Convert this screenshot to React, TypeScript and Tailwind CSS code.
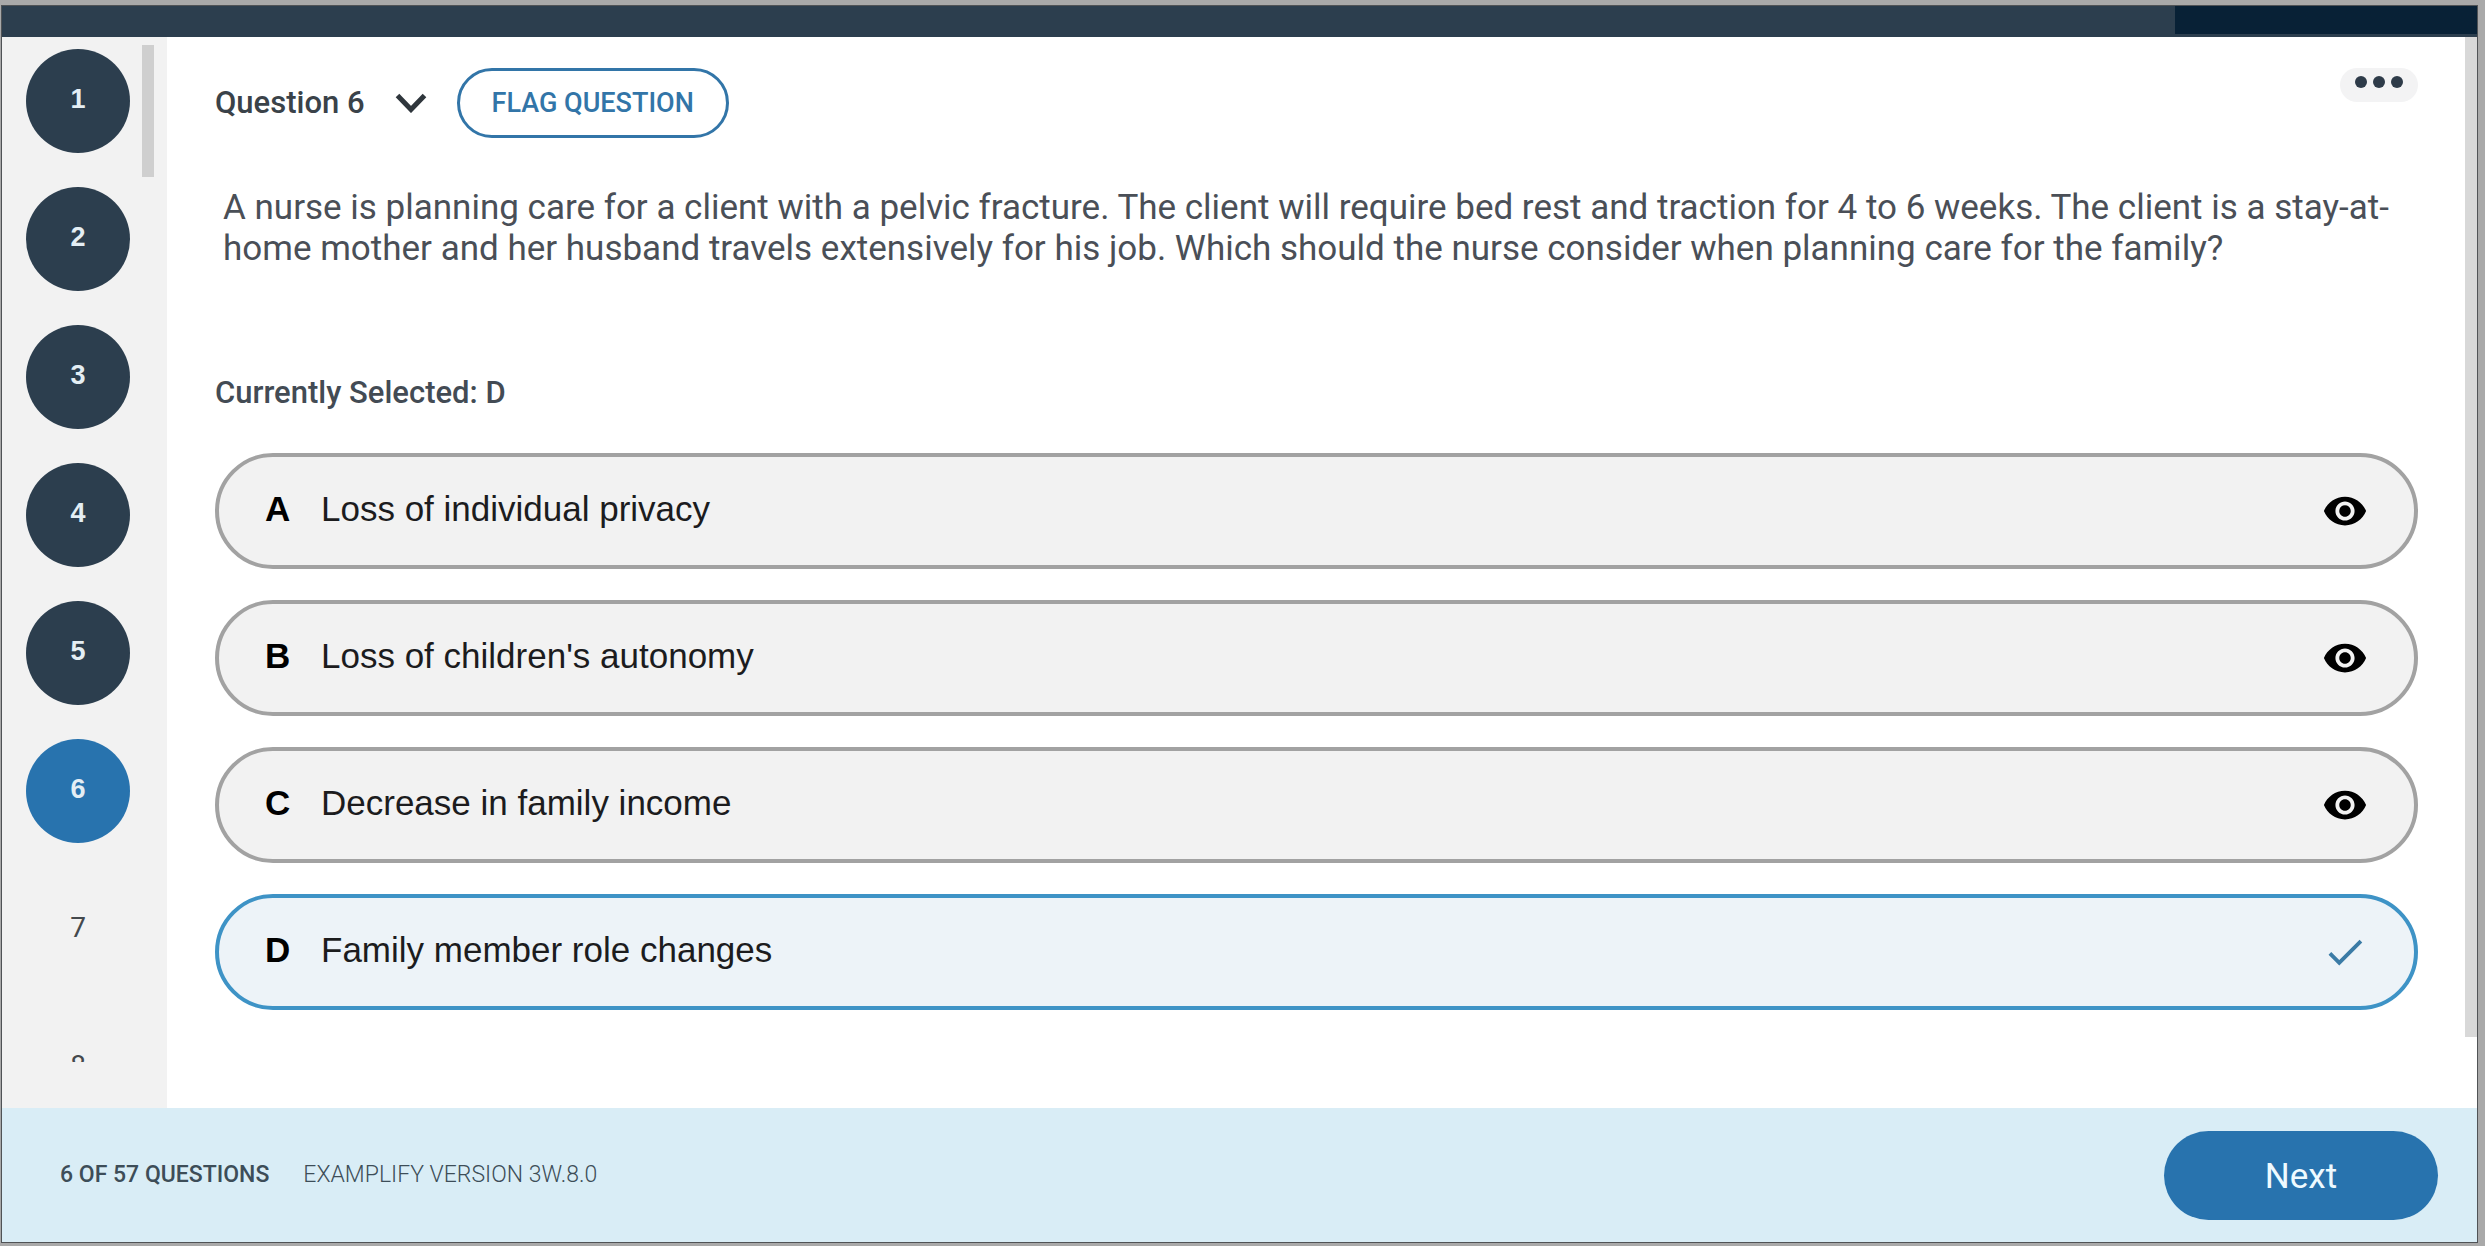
import { useState } from "react";
import { MdCheck, MdVisibility } from "react-icons/md";
import clsx from "clsx";

interface Answer {
    letter: string;
    text: string;
}

const answers: Answer[] = [
    { letter: "A", text: "Loss of individual privacy" },
    { letter: "B", text: "Loss of children's autonomy" },
    { letter: "C", text: "Decrease in family income" },
    { letter: "D", text: "Family member role changes" },
];

const questionNumbers = [1, 2, 3, 4, 5, 6, 7, 8];

interface QuestionNavProps {
    current: number;
    onSelect: (value: number) => void;
}

const QuestionNav: React.FC<QuestionNavProps> = ({ current, onSelect }) => {
    return (
        <nav aria-label="Questions" className="flex w-[165px] shrink-0 bg-[#f2f2f2] pb-[46px]">
            <div className="flex flex-1 flex-col items-center gap-[34px] overflow-hidden pt-3 pl-3">
                {questionNumbers.map((number) => (
                    <button
                        key={number}
                        onClick={() => onSelect(number)}
                        className={clsx(
                            "h-26 w-26 shrink-0 rounded-full leading-none",
                            number <= current
                                ? "pb-1 font-['Liberation_Sans',sans-serif] text-[27px] font-bold text-[#e4eef4]"
                                : "pb-[2px] text-[28px] text-[#44494d]",
                            number < current && "bg-[#2c3e4e]",
                            number === current && "bg-[#2873ae]"
                        )}
                    >
                        {number}
                    </button>
                ))}
            </div>
            {/* Scroll thumb */}
            <div className="mt-2 mr-[13px] h-[132px] w-3 bg-[#cfcfcf]" />
        </nav>
    );
};

interface AnswerOptionProps {
    answer: Answer;
    selected: boolean;
    onSelect: () => void;
}

const AnswerOption: React.FC<AnswerOptionProps> = ({ answer, selected, onSelect }) => {
    const id = `answer-${answer.letter}`;

    return (
        <div
            className={clsx(
                "flex h-29 items-center rounded-full border-4 pr-[46px] pl-11",
                selected ? "border-[#3e93c6] bg-[#edf3f8]" : "border-[#a2a2a2] bg-[#f2f2f2]"
            )}
        >
            <input
                type="radio"
                name="answer"
                id={id}
                checked={selected}
                onChange={onSelect}
                className="sr-only"
            />
            <label
                htmlFor={id}
                className="flex flex-1 cursor-pointer items-center pb-1 font-['Liberation_Sans',sans-serif] text-[35px] leading-10 text-[#1c1c1e]"
            >
                <span className="w-[58px] pl-[2px] font-bold text-black">{answer.letter}</span>
                <span>{answer.text}</span>
            </label>
            {selected ? (
                <MdCheck size={46} className="text-[#3b7ba6]" />
            ) : (
                <button aria-label={`Hide answer ${answer.letter}`} className="text-black">
                    <MdVisibility size={46} />
                </button>
            )}
        </div>
    );
};

const App = () => {
    const [question, setQuestion] = useState(6);
    const [selected, setSelected] = useState("D");

    return (
        <div className="h-screen bg-[#a9a9a9] pt-[5px] pr-[7px] pb-[3px] pl-px font-[Roboto,sans-serif]">
            <div className="flex h-full flex-col border border-[#505356] bg-white">
                {/* Top bar */}
                <header className="flex h-[31px] shrink-0 justify-end bg-[#2c3e4e]">
                    <div className="h-7 w-[302px] bg-[#082136]" />
                </header>

                <div className="flex min-h-0 flex-1">
                    <QuestionNav current={question} onSelect={setQuestion} />

                    <main className="flex-1 overflow-hidden pt-[31px] pr-[47px] pl-12">
                        <div className="flex items-start justify-between">
                            <div className="flex items-center gap-[30px]">
                                <button className="flex items-center gap-[30px] text-[31px] leading-10 font-medium text-[#3a4249]">
                                    Question {question}
                                    <svg width="32" height="20" viewBox="0 0 32 20" fill="none" aria-hidden="true">
                                        <path d="M2.5 2.5 16 16.5 29.5 2.5" stroke="#2f363c" strokeWidth="5" />
                                    </svg>
                                </button>
                                <button className="h-[70px] rounded-full border-3 border-[#3275a8] px-8 text-[27px] leading-10 font-medium text-[#3275a8]">
                                    FLAG QUESTION
                                </button>
                            </div>
                            <button aria-label="More options" className="flex h-[34px] w-[78px] justify-center rounded-full bg-[#f3f3f4] pt-2">
                                <svg width="48" height="12" viewBox="0 0 48 12" fill="#2e3b49" aria-hidden="true">
                                    <circle cx="6" cy="6" r="6" />
                                    <circle cx="24" cy="6" r="6" />
                                    <circle cx="42" cy="6" r="6" />
                                </svg>
                            </button>
                        </div>

                        <p className="mt-[49px] pl-2 text-[35px] leading-[41px] text-[#4a4f57]">
                            A nurse is planning care for a client with a pelvic fracture. The client will require bed
                            rest and traction for 4 to 6 weeks. The client is a stay-at-home mother and her husband
                            travels extensively for his job. Which should the nurse consider when planning care for the
                            family?
                        </p>

                        <h2 className="mt-[104px] text-[31px] leading-10 font-medium text-[#434b54]">
                            Currently Selected: {selected}
                        </h2>

                        <div className="mt-10 flex flex-col gap-[31px]">
                            {answers.map((answer) => (
                                <AnswerOption
                                    key={answer.letter}
                                    answer={answer}
                                    selected={answer.letter === selected}
                                    onSelect={() => setSelected(answer.letter)}
                                />
                            ))}
                        </div>
                    </main>

                    {/* Page scroll thumb */}
                    <div className="mb-[71px] w-3 shrink-0 bg-[#d8d8d8]" />
                </div>

                <footer className="flex h-[134px] shrink-0 items-center bg-[#d9edf6] pr-[39px] pl-[58px] text-[23px] text-[#3d4d58]">
                    <span className="font-medium">{question} OF 57 QUESTIONS</span>
                    <span className="ml-[34px] font-light">EXAMPLIFY VERSION 3W.8.0</span>
                    <button className="ml-auto h-[89px] w-[274px] rounded-full bg-[#2873ae] pt-1 text-[35px] text-[#eefaff]">
                        Next
                    </button>
                </footer>
            </div>
        </div>
    );
};

export default App;
